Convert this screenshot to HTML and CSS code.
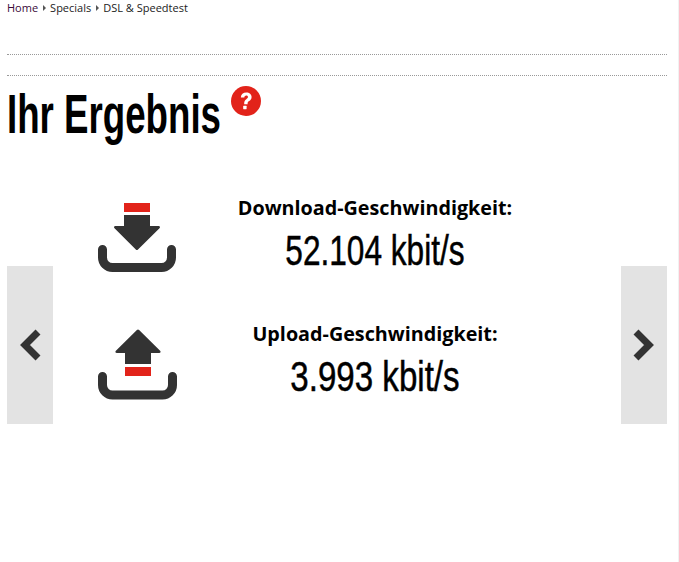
FILE: index.html
```html
<!DOCTYPE html>
<html lang="de">
<head>
<meta charset="utf-8">
<title>Ihr Ergebnis</title>
<link rel="stylesheet" href="styles.css">
</head>
<body>
<div class="page">
  <nav class="crumbs">
    <span class="crumb-home">Home</span><span class="sep"></span><span>Specials</span><span class="sep"></span><span>DSL &amp; Speedtest</span>
  </nav>
  <div class="rule-box"></div>
  <div class="title-row">
    <h1 class="title"><span class="cond-title">Ihr Ergebnis</span></h1>
    <svg class="help" width="30" height="30" viewBox="0 0 30 30" aria-label="Hilfe">
      <circle cx="15" cy="15" r="15" fill="#e2231a"/>
      <path d="M9.800 11.400c.2-3.200 2.400-5 5.500-5s5.300 1.800 5.300 4.500c0 2.100-1.200 3.200-2.500 4.100-1.100.8-1.500 1.300-1.500 2.500v.7h-3.400v-1c0-2 .7-3 2.100-4 1.100-.8 1.700-1.300 1.700-2.100 0-1-.7-1.600-1.700-1.600-1.100 0-1.900.7-2 2z" fill="#fff"/>
      <rect x="12.200" y="19.800" width="3.400" height="3.400" rx=".4" fill="#fff"/>
    </svg>
  </div>
  <section class="results">
    <div class="arrow arrow-prev">
      <svg width="24" height="32" viewBox="0 0 24 32"><path d="M20 3 7 16l13 13" fill="none" stroke="#333" stroke-width="7"/></svg>
    </div>
    <div class="arrow arrow-next">
      <svg width="24" height="32" viewBox="0 0 24 32"><path d="M4 3l13 13L4 29" fill="none" stroke="#333" stroke-width="7"/></svg>
    </div>
    <div class="row">
      <svg class="icon" width="81" height="72" viewBox="0 0 81 72">
        <rect x="27" y="0" width="26" height="9" fill="#e2231a"/>
        <path d="M27 12h26v11h8.500c1.500 0 2 1.200 1 2.200L41 46.500c-.7.700-1.500.700-2.200 0L17.500 25.200c-1-1-.5-2.200 1-2.200H27z" fill="#333"/>
        <path d="M5.500 46.500v8a10 10 0 0 0 10 10h49a10 10 0 0 0 10-10v-8" fill="none" stroke="#333" stroke-width="9" stroke-linecap="round"/>
      </svg>
      <div class="text">
        <div class="label">Download-Geschwindigkeit:</div>
        <div class="value"><span class="cond-value">52.104 kbit/s</span></div>
      </div>
    </div>
    <div class="row">
      <svg class="icon" width="81" height="72" viewBox="0 0 81 72">
        <path d="M39.900 1c.7-.7 1.500-.7 2.200 0l21 20.800c1 1 .5 2.200-1 2.200H54v11H28V24h-8.100c-1.500 0-2-1.200-1-2.200z" fill="#333"/>
        <rect x="28" y="38" width="26" height="9" fill="#e2231a"/>
        <path d="M5.500 47.500v8.500a10 10 0 0 0 10 10h50a10 10 0 0 0 10-10v-8.500" fill="none" stroke="#333" stroke-width="9" stroke-linecap="round"/>
      </svg>
      <div class="text">
        <div class="label">Upload-Geschwindigkeit:</div>
        <div class="value"><span class="cond-value cond-value-wide">3.993 kbit/s</span></div>
      </div>
    </div>
  </section>
</div>
</body>
</html>
```
FILE: styles.css
```css
html, body { margin: 0; padding: 0; background: #fff; }
body { height: 562px; overflow: hidden; font-family: "Open Sans", sans-serif; color: #000; }
.page { width: 679px; height: 562px; box-sizing: border-box; padding: 0 11px 0 7px; border-right: 1px solid #f1f1f1; }
.crumbs { height: 15px; display: flex; align-items: center; font-size: 11px; line-height: 15px; color: #222; }
.crumb-home { color: #3a0a3a; }
.sep { width: 0; height: 0; margin: 1px 4.500px 0 4.500px; border-left: 3px solid #555; border-top: 3px solid transparent; border-bottom: 3px solid transparent; }
.rule-box { height: 20px; margin-top: 39px; border-top: 1px dotted #999; border-bottom: 1px dotted #999; }
.title-row { display: flex; align-items: flex-start; height: 115px; }
.title { margin: 0; width: 215px; white-space: nowrap; font-weight: 700; font-size: 56px; line-height: 76px; font-family: "Liberation Sans", sans-serif; }
.cond-title { display: inline-block; transform: scaleX(.655); transform-origin: 0 50%; }
.help { margin: 10px 0 0 9px; }
.results { position: relative; height: 240px; }
.arrow { position: absolute; top: 75px; width: 46px; height: 158px; background: #e3e3e3; display: flex; align-items: center; justify-content: center; }
.arrow-prev { left: 0; }
.arrow-next { right: 0; }
.row { display: flex; align-items: flex-start; height: 126px; }
.icon { flex: none; margin-left: 90px; margin-top: 12px; }
.text { width: 300px; margin-left: 47px; text-align: center; }
.label { font-size: 19.750px; line-height: 24px; font-weight: 700; color: #000; padding-top: 5px; }
.value { font-size: 43px; line-height: 56px; margin-top: 2px; font-family: "Liberation Sans", sans-serif; }
.cond-value { display: inline-block; transform: scaleX(.735); transform-origin: 50% 50%; white-space: nowrap; -webkit-text-stroke: .5px #000; }
.cond-value-wide { transform: scaleX(.77); }
```
